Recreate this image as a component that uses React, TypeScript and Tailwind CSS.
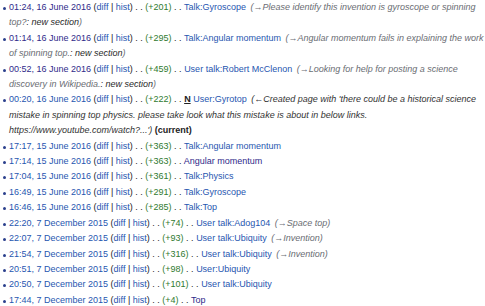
import React from "react";

type Row = {
  date: string;
  visitedDate?: boolean;
  size: string;
  page: string;
  visitedPage?: boolean;
  isNew?: boolean;
  section?: string;
  note?: string;
  created?: string;
  current?: boolean;
};

const rows: Row[] = [
  { date: "01:24, 16 June 2016", visitedDate: true, size: "+201", page: "Talk:Gyroscope", section: "Please identify this invention is gyroscope or spinning top?", note: "new section" },
  { date: "01:14, 16 June 2016", visitedDate: true, size: "+295", page: "Talk:Angular momentum", section: "Angular momentum fails in explaining the work of spinning top.", note: "new section" },
  { date: "00:52, 16 June 2016", visitedDate: true, size: "+459", page: "User talk:Robert McClenon", section: "Looking for help for posting a science discovery in Wikipedia.", note: "new section" },
  {
    date: "00:20, 16 June 2016",
    size: "+222",
    isNew: true,
    page: "User:Gyrotop",
    created:
      "Created page with 'there could be a historical science mistake in spinning top physics. please take look what this mistake is about in below links. https://www.youtube.com/watch?...'",
    current: true,
  },
  { date: "17:17, 15 June 2016", size: "+363", page: "Talk:Angular momentum" },
  { date: "17:14, 15 June 2016", size: "+363", page: "Angular momentum", visitedPage: true },
  { date: "17:04, 15 June 2016", size: "+361", page: "Talk:Physics" },
  { date: "16:49, 15 June 2016", size: "+291", page: "Talk:Gyroscope" },
  { date: "16:46, 15 June 2016", size: "+285", page: "Talk:Top" },
  { date: "22:20, 7 December 2015", size: "+74", page: "User talk:Adog104", section: "Space top" },
  { date: "22:07, 7 December 2015", size: "+93", page: "User talk:Ubiquity", section: "Invention" },
  { date: "21:54, 7 December 2015", size: "+316", page: "User talk:Ubiquity", section: "Invention" },
  { date: "20:51, 7 December 2015", size: "+98", page: "User:Ubiquity" },
  { date: "20:50, 7 December 2015", size: "+101", page: "User talk:Ubiquity" },
  { date: "17:44, 7 December 2015", size: "+4", page: "Top", visitedPage: true },
];

function Contrib({ r }: { r: Row }) {
  return (
    <li className="relative pl-[9px]">
      <span className="absolute left-[3px] top-[7px] h-[3px] w-[3px] rounded-full bg-[#2a3f8c]" />
      <a className={r.visitedDate ? "text-[#2f2a8a]" : "text-[#1f56b0]"}>{r.date}</a>{" "}
      (<a className="text-[#1f56b0]">diff</a> | <a className="text-[#1f56b0]">hist</a>) . .{" "}
      <span className="text-[#2f7a2f]">({r.size})</span> . .{" "}
      {r.isNew && (
        <>
          <abbr className="font-bold underline">N</abbr>{" "}
        </>
      )}
      <a className={r.visitedPage ? "text-[#2f2a8a]" : "text-[#1f56b0]"}>{r.page}</a>
      {r.section && (
        <>
          {" "}
          <span className="ml-[2px] italic text-[#6a6d73]">
            (→{r.section}
            {r.note ? <span className="text-[#2a2a2a]">: {r.note}</span> : null})
          </span>
        </>
      )}
      {r.created && (
        <>
          {" "}
          <span className="ml-[2px] italic text-[#333]">(←{r.created})</span>
        </>
      )}
      {r.current && (
        <>
          {" "}
          <span className="font-bold">(current)</span>
        </>
      )}
    </li>
  );
}

export default function App() {
  return (
    <div className="h-[306px] w-[485px] overflow-hidden bg-white font-['Liberation_Sans',Arial,sans-serif] text-[9px] leading-[15.4px] text-[#222]">
      <ul>
        {rows.map((r, i) => (
          <Contrib key={i} r={r} />
        ))}
      </ul>
    </div>
  );
}
